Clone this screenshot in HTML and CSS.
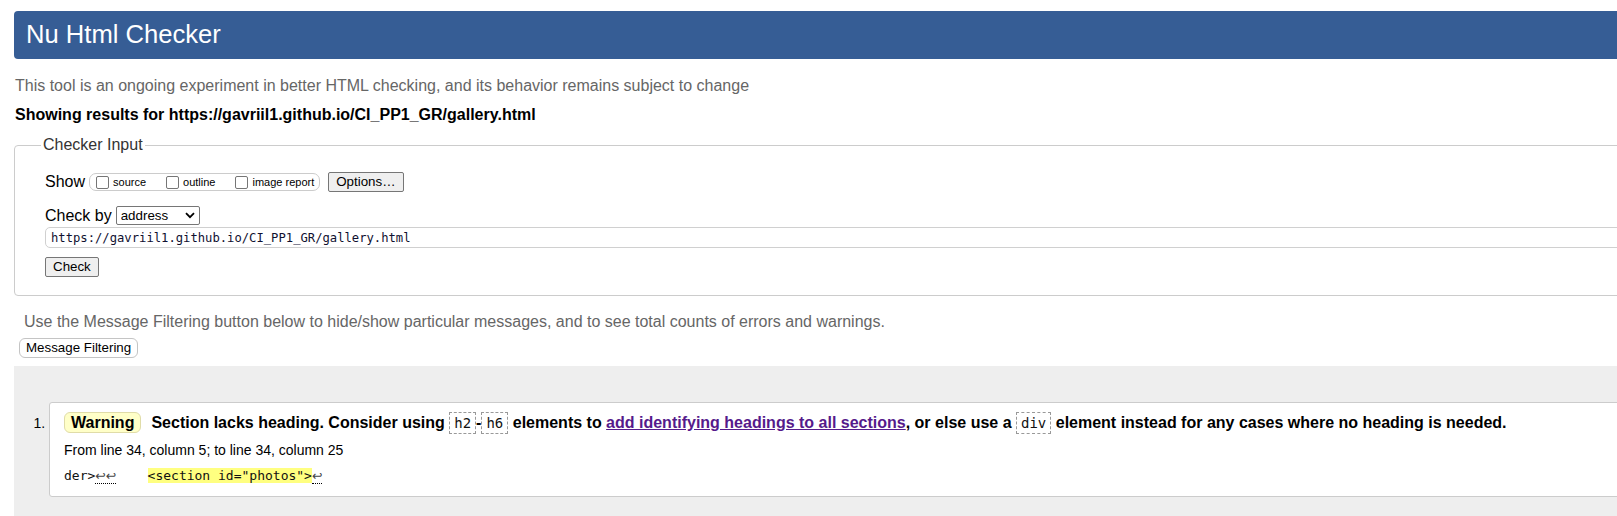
FILE: index.html
```html
<!DOCTYPE html>
<html lang="en">
<head>
<meta charset="utf-8">
<title>Nu Html Checker</title>
<link rel="stylesheet" href="styles.css">
</head>
<body>
<div class="page">
  <h1 class="title">Nu Html Checker</h1>
  <p class="intro">This tool is an ongoing experiment in better HTML checking, and its behavior remains subject to change</p>
  <p class="results-for">Showing results for https://gavriil1.github.io/CI_PP1_GR/gallery.html</p>
  <form class="checker">
    <fieldset class="checker-input">
      <legend>Checker Input</legend>
      <div class="row">
        <span class="label">Show</span>
        <span class="show-group">
          <label class="opt"><input type="checkbox" class="box">source</label>
          <label class="opt"><input type="checkbox" class="box">outline</label>
          <label class="opt"><input type="checkbox" class="box">image report</label>
        </span>
        <button type="button" class="btn btn-options">Options…</button>
      </div>
      <div class="row row-by">
        <span class="label">Check by</span>
        <span class="select-wrap">
          <select class="select"><option>address</option></select>
          <svg class="chev" width="10" height="7" viewBox="0 0 10 7"><path d="M1 1.2 L5 5.2 L9 1.2" fill="none" stroke="#000" stroke-width="1.8"/></svg>
        </span>
      </div>
      <input class="url" type="text" value="https://gavriil1.github.io/CI_PP1_GR/gallery.html">
      <div class="row row-check">
        <button type="button" class="btn">Check</button>
      </div>
    </fieldset>
  </form>
  <p class="filter-note">Use the Message Filtering button below to hide/show particular messages, and to see total counts of errors and warnings.</p>
  <button type="button" class="btn btn-round">Message Filtering</button>
  <div class="results">
    <ol class="messages">
      <li class="message">
        <p class="msg-text"><strong class="badge">Warning</strong><span class="msg-body">Section lacks heading. Consider using <code class="chip">h2</code>-<code class="chip">h6</code> elements to <a class="link" href="#">add identifying headings to all sections</a>, or else use a <code class="chip">div</code> element instead for any cases where no heading is needed.</span></p>
        <p class="location">From line 34, column 5; to line 34, column 25</p>
        <p class="extract"><code class="ext">der&gt;<span class="lf">↩↩</span>    <mark class="hl">&lt;section id="photos"&gt;</mark><span class="lf">↩</span></code></p>
      </li>
    </ol>
  </div>
</div>
</body>
</html>
```

FILE: styles.css
```css
html, body {
  margin: 0;
  padding: 0;
}
body {
  font-family: "Liberation Sans", Arial, sans-serif;
  font-size: 16px;
  color: #000;
  background: #fff;
  overflow: hidden;
}
.page {
  width: 1760px;
  padding: 11px 0 0 14px;
}
.title {
  margin: 0;
  height: 48px;
  line-height: 47px;
  padding-left: 12px;
  background: #365d95;
  color: #fff;
  font-weight: normal;
  font-size: 25.6px;
  border-radius: 4px;
}
.intro {
  margin: 17px 0 0 1px;
  color: #666;
  line-height: 19px;
}
.results-for {
  margin: 10px 0 0 1px;
  font-weight: bold;
  line-height: 19px;
}
.checker {
  margin: 12px 0 0;
}
.checker-input {
  margin: 0;
  min-width: 0;
  border: 1px solid #ccc;
  border-radius: 4px;
  padding: 18px 0 18px 29px;
}
.checker-input legend {
  padding: 0 2px;
  margin-left: -3px;
  color: #333;
  font-size: 16px;
  line-height: 18px;
}
.row {
  display: flex;
  align-items: center;
  height: 20px;
}
.label {
  font-size: 16px;
  line-height: 18px;
  margin-left: 1px;
  margin-right: 4px;
}
.show-group {
  display: flex;
  align-items: center;
  height: 16px;
  border: 1px solid #ccc;
  border-radius: 7px;
  padding: 0 5px 0 6px;
  gap: 20px;
}
.opt {
  display: flex;
  align-items: center;
  font-size: 11px;
  line-height: 13px;
  gap: 4px;
}
.box {
  appearance: none;
  -webkit-appearance: none;
  margin: 0;
  width: 13px;
  height: 13px;
  border: 1px solid #767676;
  border-radius: 2px;
  background: #fff;
}
.btn {
  font-family: "Liberation Sans", Arial, sans-serif;
  font-size: 13.333px;
  height: 20px;
  line-height: 18px;
  padding: 0 7px;
  margin: 0;
  border: 1px solid #767676;
  border-radius: 2px;
  background: #efefef;
  color: #000;
}
.btn-options {
  margin-left: 8px;
}
.row-by {
  margin-top: 14px;
  height: 19px;
}
.select-wrap {
  position: relative;
  display: inline-block;
  height: 19px;
}
.select {
  appearance: none;
  -webkit-appearance: none;
  box-sizing: border-box;
  width: 84px;
  height: 19px;
  margin: 0;
  padding: 0 0 0 4px;
  font-family: "Liberation Sans", Arial, sans-serif;
  font-size: 13.333px;
  line-height: 17px;
  border: 1px solid #767676;
  border-radius: 2px;
  background: #fff;
  color: #000;
}
.chev {
  position: absolute;
  right: 5px;
  top: 6px;
}
.url {
  display: block;
  box-sizing: border-box;
  width: 1700px;
  height: 21px;
  margin: 2px 0 0 1px;
  padding: 0 5px;
  border: 1px solid #d0d0d0;
  border-radius: 5px;
  font-family: "DejaVu Sans Mono", "Liberation Mono", monospace;
  font-size: 12.2px;
  color: #101030;
  background: #fff;
}
.row-check {
  margin: 9px 0 0 1px;
}
.filter-note {
  margin: 16px 0 0 10px;
  color: #666;
  line-height: 19px;
}
.btn-round {
  display: block;
  margin: 7px 0 0 5px;
  padding: 0 6px;
  background: #fff;
  border-color: #c4c4c4;
  border-radius: 6px;
}
.results {
  margin-top: 8px;
  background: #eee;
  padding: 36px 0 40px 35px;
}
.messages {
  margin: 0;
  padding: 0;
}
.message {
  font-size: 14px;
  background: #fff;
  border: 1px solid #ccc;
  border-radius: 3px;
  padding: 7px 14px 12px 14px;
}
.msg-text {
  margin: 0;
  font-size: 16px;
  font-weight: bold;
  line-height: 25px;
}
.badge {
  display: inline-block;
  line-height: 19px;
  padding: 0 6px;
  background: #ffffc8;
  border: 1px solid #e0dca8;
  border-radius: 6px;
  margin-right: 10px;
}
.chip {
  font-family: "DejaVu Sans Mono", "Liberation Mono", monospace;
  font-weight: normal;
  font-size: 14px;
  line-height: 17px;
  padding: 2px 4px;
  border: 1px dashed #999;
  color: #111;
}
.link {
  color: #551a8b;
  text-decoration: underline;
}
.location {
  margin: 6px 0 0;
  font-size: 14px;
  line-height: 18px;
}
.extract {
  margin: 8px 0 0;
  line-height: 17px;
}
.ext {
  font-family: "DejaVu Sans Mono", "Liberation Mono", monospace;
  font-size: 13px;
  white-space: pre;
  color: #111;
}
.lf {
  font-family: "DejaVu Sans", sans-serif;
  font-size: 12.5px;
  color: #444;
  border-bottom: 1px dotted #000;
}
.hl {
  background: #ffff80;
  color: #111;
}
```
